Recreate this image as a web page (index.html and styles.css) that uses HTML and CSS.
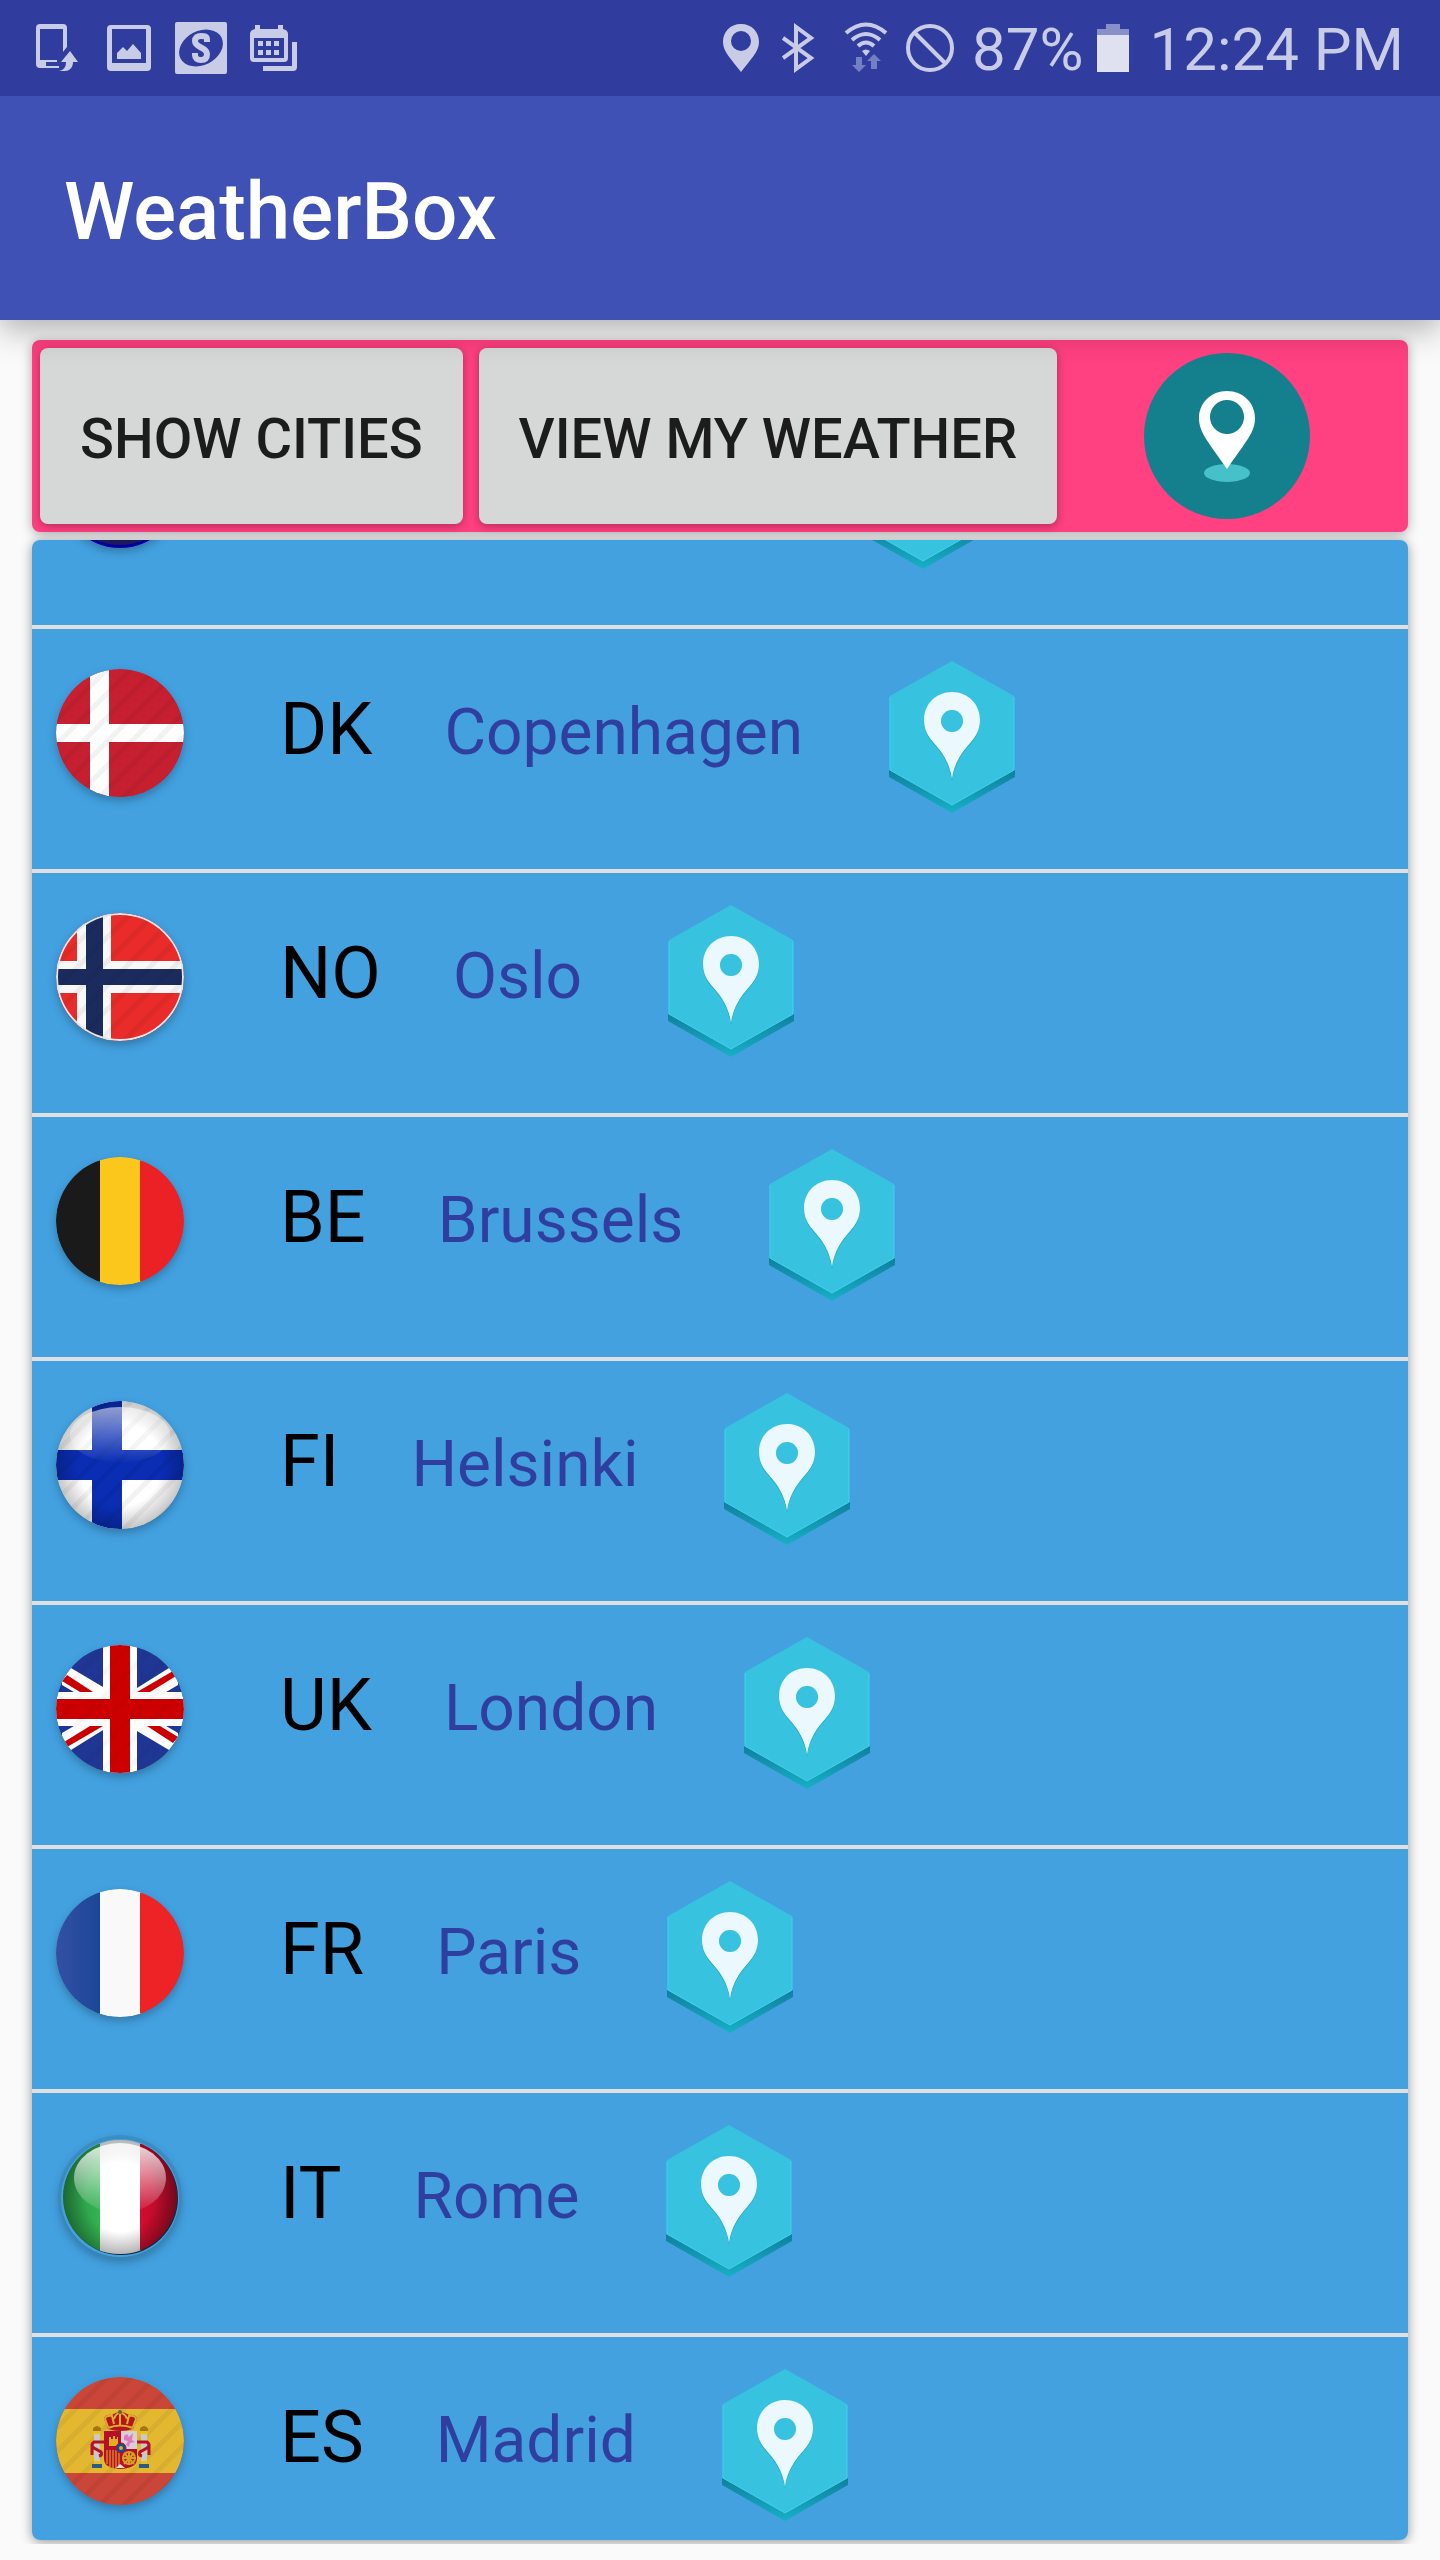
FILE: index.html
```
<!DOCTYPE html>
<html lang="en">
<head>
<meta charset="utf-8">
<meta name="viewport" content="width=device-width, initial-scale=1">
<title>WeatherBox</title>
<link rel="stylesheet" href="styles.css">
</head>
<body>

<!-- Shared drawing parts -->
<svg class="defs" width="0" height="0" aria-hidden="true">
  <defs>
    <clipPath id="round"><circle cx="64" cy="64" r="64"/></clipPath>
    <clipPath id="round-small"><circle cx="64" cy="64" r="57"/></clipPath>
    <pattern id="stripes" width="17" height="17" patternUnits="userSpaceOnUse" patternTransform="rotate(45)">
      <rect width="5" height="17" fill="#000" fill-opacity="0.05"/>
    </pattern>
    <radialGradient id="edge" cx="0.5" cy="0.5" r="0.5">
      <stop offset="0.65" stop-color="#000" stop-opacity="0"/>
      <stop offset="1" stop-color="#000" stop-opacity="0.22"/>
    </radialGradient>
    <radialGradient id="edge-deep" cx="0.5" cy="0.5" r="0.5">
      <stop offset="0.6" stop-color="#000" stop-opacity="0"/>
      <stop offset="1" stop-color="#000" stop-opacity="0.3"/>
    </radialGradient>
    <linearGradient id="gloss" x1="0" y1="0" x2="0" y2="1">
      <stop offset="0" stop-color="#fff" stop-opacity="0.55"/>
      <stop offset="1" stop-color="#fff" stop-opacity="0"/>
    </linearGradient>
    <linearGradient id="gloss-strong" x1="0" y1="0" x2="0" y2="1">
      <stop offset="0" stop-color="#fff" stop-opacity="0.85"/>
      <stop offset="1" stop-color="#fff" stop-opacity="0.05"/>
    </linearGradient>
    <linearGradient id="rim" x1="0" y1="0" x2="0" y2="1">
      <stop offset="0" stop-color="#0f7f9f"/>
      <stop offset="1" stop-color="#17b0c6"/>
    </linearGradient>
    <linearGradient id="fr-blue" x1="0" y1="0" x2="1" y2="0">
      <stop offset="0" stop-color="#3450a4"/>
      <stop offset="1" stop-color="#1b4698"/>
    </linearGradient>
    <linearGradient id="it-green" x1="0" y1="0" x2="1" y2="0">
      <stop offset="0" stop-color="#268a40"/>
      <stop offset="1" stop-color="#33b552"/>
    </linearGradient>
    <linearGradient id="it-red" x1="0" y1="0" x2="1" y2="0">
      <stop offset="0" stop-color="#d30d31"/>
      <stop offset="1" stop-color="#9c0a24"/>
    </linearGradient>
    <symbol id="pin" viewBox="0 0 126 152">
      <path d="M0 109 63 144 126 109V116L63 152 0 116Z" fill="url(#rim)"/>
      <path d="M63 0 125 35V109L63 144 1 109V35Z" fill="#37c3df"/>
      <path d="M1 36V109L63 144 125 109V36" fill="none" stroke="#3fd2ec" stroke-width="1"/>
      <path fill-rule="evenodd" d="M63 32C47 32 35 44 35 60 35 70 39 76 44 82 54 93 61 104 63 120 65 104 72 93 82 82 87 76 91 70 91 60 91 44 79 32 63 32ZM63 49a11 11 0 1 1 0 22 11 11 0 1 1 0-22Z" fill="#1a9fbb"/>
      <path fill-rule="evenodd" d="M63 31C47 31 35 43 35 59 35 69 39 75 44 81 54 92 61 103 63 118 65 103 72 92 82 81 87 75 91 69 91 59 91 43 79 31 63 31ZM63 49a11 11 0 1 1 0 22 11 11 0 1 1 0-22Z" fill="#ebf8fd"/>
    </symbol>
  </defs>
</svg>

<header class="status">
  <div class="status-notes">
    <svg width="47" height="52" viewBox="36 22 47 52" aria-hidden="true">
      <path d="M40 24H63Q67 24 67 28V47L63 52V29H40V60H57V62H46V66H59V68H40Q36 68 36 64V28Q36 24 40 24Z" fill="currentColor"/>
      <path d="M70 51 78 62H73C73 68 69 71 65 71H59C64 70 66 67 66 62H61Z" fill="currentColor"/>
    </svg>
    <svg width="48" height="52" viewBox="105 22 48 52" aria-hidden="true">
      <path fill-rule="evenodd" d="M111 25H147Q151 25 151 29V67Q151 71 147 71H111Q107 71 107 67V29Q107 25 111 25ZM112 29V63H146V29Z" fill="currentColor"/>
      <path d="M117 59V53L123 47 127 51 133 44 141 53V59Z" fill="currentColor"/>
    </svg>
    <svg width="52" height="52" viewBox="175 22 52 52" aria-hidden="true">
      <rect x="175" y="22" width="52" height="52" rx="2" fill="currentColor"/>
      <ellipse cx="201" cy="48" rx="23" ry="17" transform="rotate(-27 201 48)" fill="#303c9e"/>
      <path d="M207 42V40C207 36 204.500 36 201 36 197 36 195 38 195 41 195 48 207 47 207 54 207 58 205 60 201 60 197 60 195 58 195 55V53" fill="none" stroke="currentColor" stroke-width="6"/>
    </svg>
    <svg width="48" height="52" viewBox="249 22 48 52" aria-hidden="true">
      <path fill-rule="evenodd" d="M255 25H260V29H278V25H283V29Q288 30 288 34V58Q288 62 284 62H254Q250 62 250 58V34Q250 30 255 29ZM254 38V58H284V38Z" fill="currentColor"/>
      <path d="M258 41h5v5h-5zM266 41h5v5h-5zM274 41h5v5h-5zM258 50h5v5h-5zM266 50h5v5h-5zM274 50h5v5h-5zM292 42H297V67Q297 71 293 71H263V66H292Z" fill="currentColor"/>
    </svg>
  </div>
  <div class="status-system">
    <svg width="44" height="52" viewBox="720 22 44 52" aria-hidden="true">
      <path fill-rule="evenodd" d="M739 24C728 24 721 32 721 42 721 52 730 60 739 72 748 60 757 52 757 42 757 32 750 24 739 24ZM739 31a10 10 0 1 1 0 20 10 10 0 1 1 0-20Z" fill="currentColor"/>
    </svg>
    <svg width="46" height="52" viewBox="780 22 46 52" aria-hidden="true">
      <path d="M781 38 809 58 794 69V27L809 38 781 58" fill="none" stroke="currentColor" stroke-width="4"/>
    </svg>
    <svg width="44" height="52" viewBox="842 22 44 52" aria-hidden="true">
      <path d="M844 33Q864 16 884 33M850 40Q864 28 878 40M856 46Q864 39 872 46" fill="none" stroke="currentColor" stroke-width="4"/>
      <path d="M860 51Q864 48 868 51L864 56Z" fill="currentColor"/>
      <path d="M854 57H860V65H864L857 72 850 65H854ZM869 69V61H865L872 54 879 61H875V69Z" fill="#7480c4"/>
    </svg>
    <svg width="52" height="52" viewBox="902 22 52 52" aria-hidden="true">
      <circle cx="928" cy="48" r="22" fill="none" stroke="currentColor" stroke-width="4"/>
      <path d="M913 33 943 63" stroke="currentColor" stroke-width="4"/>
    </svg>
    <div class="battery">
      <span class="status-text">87%</span>
      <svg width="32" height="52" viewBox="1095 22 32 52" aria-hidden="true">
        <path d="M1095 29H1104V24H1118V29H1127V35H1095Z" fill="#8890c8"/>
        <rect x="1095" y="35" width="32" height="37" fill="#dfe1f0"/>
      </svg>
    </div>
    <time class="status-text" datetime="12:24">12:24 PM</time>
  </div>
</header>

<div class="app-bar"><h1>WeatherBox</h1></div>

<main class="content">
  <div class="actions">
    <button class="action" type="button">SHOW CITIES</button>
    <button class="action" type="button">VIEW MY WEATHER</button>
    <div class="here-slot">
      <button class="here" type="button" aria-label="My location">
        <svg width="168" height="168" viewBox="0 0 168 168" aria-hidden="true">
          <circle cx="84" cy="84" r="83" fill="#15808d"/>
          <ellipse cx="84" cy="121" rx="23" ry="9" fill="#46c1c9"/>
          <path fill-rule="evenodd" d="M84 39C68 39 56 51 56 66 56 80 64 88 84 117 104 88 112 80 112 66 112 51 100 39 84 39ZM84 48a17 17 0 1 1 0 34 17 17 0 1 1 0-34Z" fill="#fff"/>
        </svg>
      </button>
    </div>
  </div>

  <ul class="cities" id="cities">
    <li class="city city-first">
      <svg class="flag" viewBox="0 0 128 128" aria-hidden="true">
        <circle cx="64" cy="63" r="60" fill="#0000a0"/>
        <circle cx="64" cy="63" r="57" fill="#1c1a5c"/>
      </svg>
      <button class="locate" type="button" aria-label="Locate"><svg width="126" height="152"><use href="#pin"/></svg></button>
    </li>
    <li class="city">
      <svg class="flag" viewBox="0 0 128 128" aria-hidden="true">
        <g clip-path="url(#round)">
          <rect width="128" height="128" fill="#c62030"/>
          <path d="M34 0H53V55H128V73H53V128H34V73H0V55H34Z" fill="#fff"/>
          <rect width="128" height="128" fill="url(#stripes)"/>
        </g>
      </svg>
      <span class="code">DK</span><span class="name">Copenhagen</span>
      <button class="locate" type="button" aria-label="Locate Copenhagen"><svg width="126" height="152"><use href="#pin"/></svg></button>
    </li>
    <li class="city">
      <svg class="flag" viewBox="0 0 128 128" aria-hidden="true">
        <g clip-path="url(#round)">
          <rect width="128" height="128" fill="#e92b29"/>
          <path d="M21 0H55V48H128V80H55V128H21V80H0V48H21Z" fill="#f8f8f8"/>
          <path d="M30 0H47V56H128V72H47V128H30V72H0V56H30Z" fill="#1b2b5e"/>
          <rect width="128" height="128" fill="url(#stripes)"/>
          <circle cx="64" cy="64" r="63" fill="none" stroke="#e8e4e4" stroke-width="2"/>
        </g>
      </svg>
      <span class="code">NO</span><span class="name">Oslo</span>
      <button class="locate" type="button" aria-label="Locate Oslo"><svg width="126" height="152"><use href="#pin"/></svg></button>
    </li>
    <li class="city">
      <svg class="flag" viewBox="0 0 128 128" aria-hidden="true">
        <g clip-path="url(#round)">
          <rect width="44" height="128" fill="#1a1a1a"/>
          <rect x="44" width="41" height="128" fill="#fcc71d"/>
          <rect x="84" width="44" height="128" fill="#ec2125"/>
        </g>
      </svg>
      <span class="code">BE</span><span class="name">Brussels</span>
      <button class="locate" type="button" aria-label="Locate Brussels"><svg width="126" height="152"><use href="#pin"/></svg></button>
    </li>
    <li class="city">
      <svg class="flag" viewBox="0 0 128 128" aria-hidden="true">
        <g clip-path="url(#round)">
          <rect width="128" height="128" fill="#fff"/>
          <path d="M36 0H66V49H128V79H66V128H36V79H0V49H36Z" fill="#0a2db4"/>
          <rect width="128" height="128" fill="url(#stripes)"/>
          <circle cx="64" cy="64" r="64" fill="url(#edge)"/>
          <ellipse cx="64" cy="34" rx="50" ry="28" fill="url(#gloss)"/>
        </g>
      </svg>
      <span class="code">FI</span><span class="name">Helsinki</span>
      <button class="locate" type="button" aria-label="Locate Helsinki"><svg width="126" height="152"><use href="#pin"/></svg></button>
    </li>
    <li class="city">
      <svg class="flag" viewBox="0 0 128 128" aria-hidden="true">
        <g clip-path="url(#round)">
          <rect width="128" height="128" fill="#203694"/>
          <g id="uk-diagonals">
            <path d="M15 23 47 42V50H23L6 40V20ZM113 23 81 43V50H105L122 40V20Z" fill="#fff"/>
            <path d="M11 30 37 47H24L6 36ZM117 26 81 47H94L120 31Z" fill="#c00"/>
          </g>
          <use href="#uk-diagonals" transform="rotate(180 64 64)"/>
          <path d="M47 0H81V47H128V81H81V128H47V81H0V47H47Z" fill="#fff"/>
          <path d="M54 0H74V54H128V74H74V128H54V74H0V54H54Z" fill="#c00"/>
          <rect width="128" height="128" fill="url(#stripes)" opacity="0.6"/>
        </g>
      </svg>
      <span class="code">UK</span><span class="name">London</span>
      <button class="locate" type="button" aria-label="Locate London"><svg width="126" height="152"><use href="#pin"/></svg></button>
    </li>
    <li class="city">
      <svg class="flag" viewBox="0 0 128 128" aria-hidden="true">
        <g clip-path="url(#round)">
          <rect width="44" height="128" fill="url(#fr-blue)"/>
          <rect x="44" width="41" height="128" fill="#f9f9f9"/>
          <rect x="84" width="44" height="128" fill="#ee2326"/>
        </g>
      </svg>
      <span class="code">FR</span><span class="name">Paris</span>
      <button class="locate" type="button" aria-label="Locate Paris"><svg width="126" height="152"><use href="#pin"/></svg></button>
    </li>
    <li class="city">
      <svg class="flag" viewBox="0 0 128 128" aria-hidden="true">
        <circle cx="64" cy="64" r="62" fill="#3a86b8" opacity="0.6"/>
        <circle cx="64" cy="65" r="59" fill="#43a1e0"/>
        <circle cx="65" cy="65" r="57" fill="#12283c"/>
        <g clip-path="url(#round-small)">
          <rect width="45" height="128" fill="url(#it-green)"/>
          <rect x="44" width="41" height="128" fill="#fff"/>
          <rect x="84" width="44" height="128" fill="url(#it-red)"/>
          <circle cx="64" cy="64" r="58" fill="url(#edge-deep)"/>
          <ellipse cx="64" cy="45" rx="46" ry="35" fill="url(#gloss-strong)"/>
        </g>
      </svg>
      <span class="code">IT</span><span class="name">Rome</span>
      <button class="locate" type="button" aria-label="Locate Rome"><svg width="126" height="152"><use href="#pin"/></svg></button>
    </li>
    <li class="city">
      <svg class="flag" viewBox="0 0 128 128" aria-hidden="true">
        <g clip-path="url(#round)">
          <rect width="128" height="128" fill="#ca4638"/>
          <rect y="32" width="128" height="64" fill="#e4b731"/>
          <rect width="128" height="128" fill="url(#stripes)"/>
        </g>
        <!-- pillars -->
        <path d="M38 57h6v28h-6zM85 57h6v28h-6z" fill="#ccc8c8"/>
        <path d="M37 54h8v3h-8zM84 54h8v3h-8zM38 84h6v3h-6zM85 84h6v3h-6z" fill="#e8c21c"/>
        <path d="M36 87h10v4H36zM83 87h10v4H83z" fill="#2b5a86"/>
        <path d="M37 54Q36 50 41 49 46 50 45 54ZM84 54Q83 50 88 49 93 50 92 54Z" fill="#a3741c"/>
        <path d="M48 65H38Q34 68 38 71L45 75Q47 78 43 79M36 67V78M81 65H91Q95 68 91 71L84 75Q82 78 86 79M93 67V78" fill="none" stroke="#b3122c" stroke-width="3"/>
        <!-- crown -->
        <path d="M52 52 48 42Q49 37 56 38 60 35 64 35 69 35 73 38 80 37 81 42L77 52Q64 56 52 52Z" fill="#b8141e"/>
        <path d="M52 50 49 42Q50 38 56 39L58 47M77 50 80 42Q79 38 73 39L71 47M64 34V48M58 42Q60 36 64 36 69 36 71 42M52 51Q64 46 77 51" fill="none" stroke="#d8b02c" stroke-width="2"/>
        <circle cx="64" cy="35" r="2" fill="#5c6838"/>
        <!-- shield -->
        <path d="M48 54H81V82Q81 91 64 92 48 91 48 82Z" fill="#b80f28"/>
        <path d="M65 54H81V72H65Z" fill="#d8d0d4"/>
        <path d="M53 60H55V62H57V59H59V62H61V60H62V69H53Z" fill="#e2ae20"/>
        <path d="M68 59 71 57 73 60 77 56 76 63 79 65 74 66 73 70 70 68 72 64 68 63Z" fill="#e07ac0"/>
        <path d="M51 73V87M54 73V90M57 73V91M60 73V92M63 73V91" stroke="#e4bd24" stroke-width="1"/>
        <path d="M73 75V88M66 81H80M68 76 78 87M78 76 68 87" stroke="#d8a020" stroke-width="2"/>
        <circle cx="73" cy="81" r="6" fill="none" stroke="#d8a020" stroke-width="2"/>
        <path d="M60 91 64 87 69 91Z" fill="#dcdcdc"/>
        <circle cx="65" cy="71" r="5" fill="#154a94" stroke="#b80f28"/>
        <circle cx="65" cy="71" r="2" fill="#d8b02c"/>
      </svg>
      <span class="code">ES</span><span class="name">Madrid</span>
      <button class="locate" type="button" aria-label="Locate Madrid"><svg width="126" height="152"><use href="#pin"/></svg></button>
    </li>
  </ul>
</main>
<script src="script.js"></script>
</body>
</html>
```
FILE: styles.css
```
* {
  box-sizing: border-box;
}

body {
  display: flex;
  flex-direction: column;
  height: 100vh;
  margin: 0;
  background: #fafafa;
  font-family: Roboto, "Liberation Sans", sans-serif;
}

button {
  font: inherit;
  border: 0;
  padding: 0;
  background: none;
  cursor: pointer;
}

svg {
  display: block;
  flex: none;
}

.defs {
  position: absolute;
}

/* Status bar */
.status {
  position: relative;
  z-index: 2;
  display: flex;
  justify-content: space-between;
  align-items: center;
  height: 96px;
  flex: none;
  padding: 0 36px;
  background: #303c9e;
  color: #c9cce7;
  font-size: 60px;
  line-height: 92px;
  white-space: nowrap;
}

.status-notes {
  display: flex;
  gap: 22px;
}

.status-system {
  display: flex;
  align-items: center;
  gap: 16px;
}

.status-text {
  padding-top: 4px;
}

.battery {
  display: flex;
  align-items: center;
  gap: 14px;
  margin-right: 4px;
}

/* App bar */
.app-bar {
  position: relative;
  z-index: 1;
  flex: none;
  display: flex;
  align-items: center;
  height: 224px;
  padding: 8px 64px 0;
  background: #3f51b5;
  box-shadow: 0 8px 32px rgba(0, 0, 0, 0.32);
}

.app-bar h1 {
  margin: 0;
  color: #fff;
  font-size: 80px;
  font-weight: 500;
}

/* Content */
.content {
  display: flex;
  flex-direction: column;
  flex: 1;
  min-height: 0;
  gap: 8px;
  margin-bottom: 16px;
  padding: 20px 32px 4px;
  overflow: hidden;
}

.actions {
  display: flex;
  flex: none;
  gap: 16px;
  padding: 8px;
  border-radius: 8px;
  background: #ff4081;
  box-shadow: 0 2px 12px rgba(0, 0, 0, 0.32);
}

.action {
  height: 176px;
  padding: 6px 40px 0;
  border-radius: 8px;
  background: #d6d7d7;
  box-shadow: 0 2px 8px rgba(0, 0, 0, 0.32);
  color: #1c1c1c;
  font-size: 56px;
  font-weight: 500;
  white-space: nowrap;
}

.here-slot {
  display: flex;
  flex: 1;
  align-items: center;
  justify-content: center;
  padding-right: 20px;
}

.here {
  border-radius: 50%;
}

/* City list */
.cities {
  flex: 1;
  min-height: 0;
  margin: 0;
  padding: 0;
  list-style: none;
  overflow-y: auto;
  scrollbar-width: none;
  border-radius: 8px;
  background: #43a1e0;
  box-shadow: 0 2px 12px rgba(0, 0, 0, 0.4);
}

.city {
  display: flex;
  align-items: baseline;
  height: 244px;
  padding: 32px 24px 0;
  border-bottom: 4px solid #dfdfdf;
  line-height: 138px;
}

.flag {
  align-self: flex-start;
  width: 128px;
  height: 128px;
  margin: 8px 96px 0 0;
  border-radius: 50%;
  filter: drop-shadow(0 4px 4px rgba(0, 0, 0, 0.25));
}

.code {
  margin-right: 72px;
  color: #000;
  font-size: 72px;
}

.name {
  margin-right: 86px;
  color: #303f9f;
  font-size: 64px;
}

.locate {
  align-self: flex-start;
}

.city-first .locate {
  margin-left: 580px;
}
```
FILE: script.js
```
// Open the list part-way down, just above Copenhagen.
document.getElementById("cities").scrollTop = 155;
```
